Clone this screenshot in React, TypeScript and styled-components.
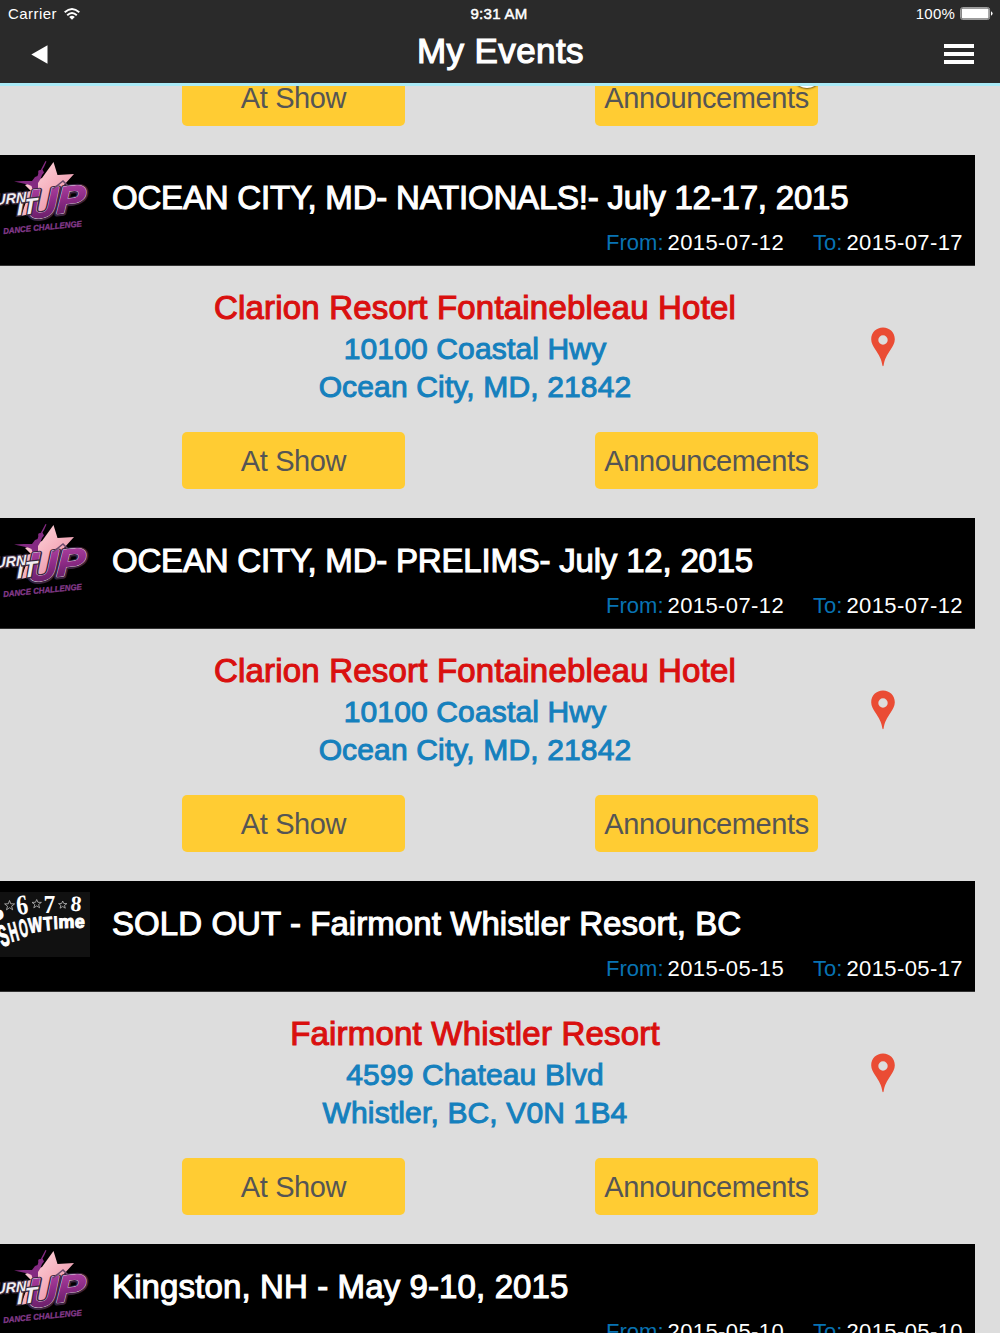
import styled, { createGlobalStyle } from "styled-components";

type LogoName = "turnItUp" | "showtime";

interface EventItem {
  id: number;
  logo: LogoName;
  title: string;
  from: string;
  to: string;
  venue?: string;
  street?: string;
  city?: string;
  titleSpacing: number;
}

const events: EventItem[] = [
  {
    id: 1,
    logo: "turnItUp",
    title: "OCEAN CITY, MD- NATIONALS!- July 12-17, 2015",
    from: "2015-07-12",
    to: "2015-07-17",
    venue: "Clarion Resort Fontainebleau Hotel",
    street: "10100 Coastal Hwy",
    city: "Ocean City, MD, 21842",
    titleSpacing: -0.2,
  },
  {
    id: 2,
    logo: "turnItUp",
    title: "OCEAN CITY, MD- PRELIMS- July 12, 2015",
    from: "2015-07-12",
    to: "2015-07-12",
    venue: "Clarion Resort Fontainebleau Hotel",
    street: "10100 Coastal Hwy",
    city: "Ocean City, MD, 21842",
    titleSpacing: -0.2,
  },
  {
    id: 3,
    logo: "showtime",
    title: "SOLD OUT - Fairmont Whistler Resort, BC",
    from: "2015-05-15",
    to: "2015-05-17",
    venue: "Fairmont Whistler Resort",
    street: "4599 Chateau Blvd",
    city: "Whistler, BC, V0N 1B4",
    titleSpacing: 0.07,
  },
  {
    id: 4,
    logo: "turnItUp",
    title: "Kingston, NH - May 9-10, 2015",
    from: "2015-05-10",
    to: "2015-05-10",
    titleSpacing: 0.12,
  },
];

const TurnItUpLogo = () => (
  <svg width="90" height="82" viewBox="0 0 90 82">
    <defs>
      <linearGradient id="star" x1="0" y1="0" x2="1" y2="1">
        <stop offset="0" stopColor="#ffe3e6" />
        <stop offset="0.5" stopColor="#f6b3c0" />
        <stop offset="1" stopColor="#dc7f9d" />
      </linearGradient>
      <linearGradient id="up" x1="0" y1="0" x2="0" y2="1">
        <stop offset="0" stopColor="#b345a5" />
        <stop offset="0.5" stopColor="#8c2a85" />
        <stop offset="1" stopColor="#5a1b5c" />
      </linearGradient>
    </defs>
    <path
      d="M53.500 7L57.500 20L74 19L64 30L68 41L44 56L21 61L27 44L20 38L31 36L25 30L42 23Z"
      fill="url(#star)"
    />
    <path
      d="M45.500 6L46.500 6.500L44 12L42.500 14.500L44 17.500L42 20L40.500 24L38 28L38 34L37 43L31.500 43L33 36L31.500 31L28 29.500L14 26.500L24 26L32 26L35 22L37.500 21L38.500 18L41 14.500Z"
      fill="#842a82"
    />
    <circle cx="40" cy="17" r="1.900" fill="#842a82" />
    <g
      fontFamily="'Liberation Sans', sans-serif"
      fontWeight="700"
      fontStyle="italic"
    >
      <g stroke="#3a2440" strokeWidth="5" strokeLinejoin="round" fill="#3a2440">
        <text transform="translate(27 64.500) rotate(-7) skewX(-8) scale(1.050 1)" fontSize="40">U</text>
        <text transform="translate(56.500 59) rotate(-6) skewX(-8) scale(1.150 1)" fontSize="37">P</text>
      </g>
      <g
        fill="url(#up)"
        stroke="#e9dfea"
        strokeWidth="1.800"
        strokeLinejoin="round"
        paintOrder="stroke"
      >
        <text transform="translate(27 64) rotate(-7) skewX(-8) scale(1.050 1)" fontSize="40">U</text>
        <text transform="translate(56.500 58.500) rotate(-6) skewX(-8) scale(1.150 1)" fontSize="37">P</text>
      </g>
      <g fill="url(#up)" stroke="url(#up)" strokeWidth="1">
        <text transform="translate(27 64) rotate(-7) skewX(-8) scale(1.050 1)" fontSize="40">U</text>
        <text transform="translate(56.500 58.500) rotate(-6) skewX(-8) scale(1.150 1)" fontSize="37">P</text>
      </g>
      <path d="M53 34L63 26L68 31" fill="none" stroke="#6a4a6c" strokeWidth="1.500" />
      <g
        fill="#efedf1"
        stroke="#37283b"
        strokeWidth="2.500"
        paintOrder="stroke"
      >
        <text transform="translate(17 60.500) rotate(-7) skewX(-6) scale(1.050 1)" fontSize="22">
          IT
        </text>
        <text transform="translate(-13.500 51) rotate(-6) skewX(-5)" fontSize="14.500">
          TURN
        </text>
      </g>
      <text
        transform="translate(3.400 79) rotate(-5.500)"
        fontSize="8.300"
        textLength="79"
        lengthAdjust="spacingAndGlyphs"
        fill="#843a8b"
        stroke="#843a8b"
        strokeWidth="0.300"
      >
        DANCE CHALLENGE
      </text>
    </g>
  </svg>
);

const ShowtimeLogo = () => (
  <svg width="90" height="65" viewBox="0 0 90 65">
    <rect width="90" height="65" fill="#111" />
    <g
      fill="#fff"
      fontFamily="'Liberation Serif', serif"
      fontWeight="700"
    >
      <text transform="translate(-8 30) rotate(-14)" fontSize="28">5</text>
      <text transform="translate(17.500 23) rotate(-8) scale(.84 1)" fontSize="28">6</text>
      <text transform="translate(43.500 20.500) scale(.9 1)" fontSize="26">7</text>
      <text transform="translate(70 18.500) rotate(5)" fontSize="22">8</text>
    </g>
    <g fill="none" stroke="#bbb" strokeWidth="0.800">
      <path d="M9.500 8.500l1.300 3.300 3.800.1-3 2.300 1.100 3.600-3.100-2.100-3.100 2.100 1-3.600-2.900-2.300 3.700-.1z" />
      <path d="M36.700 7.500l1.200 2.800 3.500.1-2.800 2.100 1 3.300-2.900-1.900-2.900 1.900 1-3.300-2.800-2.100 3.500-.1z" />
      <path d="M62.700 9l1.100 2.500 3.100.1-2.400 1.800.8 2.800-2.600-1.700-2.600 1.700.8-2.800-2.400-1.800 3.100-.1z" />
    </g>
    <g
      fill="#fff"
      stroke="#fff"
      strokeWidth="1"
      fontFamily="'Liberation Sans', sans-serif"
      fontWeight="700"
    >
      <text transform="translate(2 55) rotate(-18) scale(.48 1)" fontSize="30">S</text>
      <text transform="translate(11.500 50) rotate(-15) scale(.46 1)" fontSize="27">H</text>
      <text transform="translate(21 45.500) rotate(-12) scale(.44 1)" fontSize="25">O</text>
      <text transform="translate(29.500 41) rotate(-8) scale(.7 1)" fontSize="21">W</text>
      <text transform="translate(44 38.500) rotate(-5) scale(.78 1)" fontSize="19">T</text>
      <text transform="translate(54 37) rotate(-3) scale(.8 1)" fontSize="18">I</text>
      <text transform="translate(58.500 36) rotate(-1) scale(1 1)" fontSize="18">m</text>
      <text transform="translate(74.500 35.500) rotate(3)" fontSize="18">e</text>
    </g>
  </svg>
);

const WifiIcon = () => (
  <svg width="16" height="12" viewBox="0 0 16 12">
    <g fill="none" stroke="#fff" strokeWidth="1.900">
      <path d="M.7 4.300Q8-2.300 15.300 4.300" />
      <path d="M3.200 7.200Q8 2.700 12.800 7.200" />
    </g>
    <path d="M8 11.700L5.200 8.900Q8 6.500 10.800 8.900Z" fill="#fff" />
  </svg>
);

const BatteryIcon = () => (
  <svg width="33" height="13" viewBox="0 0 33 13">
    <rect x=".6" y=".6" width="29" height="11.800" rx="2" fill="none" stroke="#aaa" strokeWidth="1" />
    <rect x="1.600" y="1.600" width="27" height="9.800" rx="1" fill="#fff" />
    <path d="M31 4.300Q32.600 5 32.600 6.500T31 8.700Z" fill="#fff" />
  </svg>
);

const PinIcon = () => (
  <svg width="24" height="40" viewBox="0 0 24 40">
    <path
      fillRule="evenodd"
      d="M12 0.500C5.300 .500.200 5.500.200 12.200c0 3.600 1.900 6.900 4.100 10.300C8 28 10.500 32 11.400 38.500q.6 1.300 1.200 0C13.500 32 16 28 19.700 22.500c2.200-3.400 4.100-6.700 4.100-10.300C23.800 5.500 18.700.5 12 .5ZM12 8.300a4.700 4.700 0 1 1 0 9.400 4.700 4.700 0 0 1 0-9.400Z"
      fill="#ea4c34"
    />
  </svg>
);

const Actions = ({ badge }: { badge?: boolean }) => (
  <ButtonRow>
    <YellowButton>At Show</YellowButton>
    <YellowButton>
      Announcements
      {badge && <Badge />}
    </YellowButton>
  </ButtonRow>
);

const EventCard = ({ event }: { event: EventItem }) => (
  <article>
    <CardHeader>
      <LogoBox $top={event.logo === "showtime" ? 11 : 0}>
        {event.logo === "showtime" ? <ShowtimeLogo /> : <TurnItUpLogo />}
      </LogoBox>
      <CardInfo>
        <CardTitle $spacing={event.titleSpacing}>{event.title}</CardTitle>
        <Dates>
          <DateLabel>From:</DateLabel>
          <DateValue>{event.from}</DateValue>
          <DateLabel>To:</DateLabel>
          <DateValue>{event.to}</DateValue>
        </Dates>
      </CardInfo>
    </CardHeader>
    {event.venue && (
      <>
        <Place>
          <Address>
            <Venue>{event.venue}</Venue>
            <AddressLine>{event.street}</AddressLine>
            <AddressLine>{event.city}</AddressLine>
          </Address>
          <PinButton aria-label="Map">
            <PinIcon />
          </PinButton>
        </Place>
        <Actions />
      </>
    )}
  </article>
);

const App = () => {
  return (
    <Screen>
      <GlobalStyle />
      <TopBar>
        <StatusBar>
          <Carrier>
            Carrier
            <WifiIcon />
          </Carrier>
          <Clock>9:31 AM</Clock>
          <Power>
            100%
            <BatteryIcon />
          </Power>
        </StatusBar>
        <NavBar>
          <BackButton aria-label="Back">
            <svg width="17" height="19" viewBox="0 0 17 19">
              <path d="M.3 9.500L16.500.3V18.700Z" fill="#fff" />
            </svg>
          </BackButton>
          <PageTitle>My Events</PageTitle>
          <MenuButton aria-label="Menu">
            <MenuLine />
            <MenuLine />
            <MenuLine />
          </MenuButton>
        </NavBar>
      </TopBar>
      <List>
        <PreviousEvent>
          <Actions badge />
        </PreviousEvent>
        {events.map((event) => (
          <EventCard key={event.id} event={event} />
        ))}
      </List>
    </Screen>
  );
};
export default App;

const GlobalStyle = createGlobalStyle`
  body {
    margin: 0;
    background: #ddd;
    font-family: "Liberation Sans", Arial, sans-serif;
  }
  button {
    border: 0;
    padding: 0;
    background: none;
    font-family: inherit;
  }
  svg {
    display: block;
  }
`;

const Screen = styled.div`
  display: flex;
  flex-direction: column;
  width: 1000px;
  height: 1333px;
  overflow: hidden;
  background: #ddd;
`;

const TopBar = styled.header`
  flex: none;
  box-sizing: border-box;
  height: 86px;
  background: #2a2a2a;
  border-bottom: 3px solid #a9eaf6;
  color: #fff;
`;

const StatusBar = styled.div`
  display: grid;
  grid-template-columns: 1fr auto 1fr;
  height: 27px;
  padding: 0 7px 0 8px;
  font-size: 15px;
  line-height: 27px;
`;

const Carrier = styled.div`
  display: flex;
  align-items: center;
  gap: 7px;
  letter-spacing: 0.45px;
`;

const Clock = styled.div`
  padding-right: 3px;
  letter-spacing: 0.3px;
  -webkit-text-stroke: 0.5px #fff;
`;

const Power = styled.div`
  display: flex;
  align-items: center;
  justify-content: flex-end;
  gap: 5px;
  letter-spacing: 0.2px;
`;

const NavBar = styled.div`
  display: flex;
  align-items: center;
  justify-content: space-between;
  height: 54px;
  padding: 0 26px 0 31px;
`;

const BackButton = styled.button`
  width: 26px;
`;

const PageTitle = styled.h1`
  margin: -6px 0 0;
  font-size: 35px;
  font-weight: 400;
  line-height: 40px;
  letter-spacing: 0.4px;
  -webkit-text-stroke: 1.2px #fff;
`;

const MenuButton = styled.button`
  display: flex;
  flex-direction: column;
  gap: 4px;
  width: 30px;
`;

const MenuLine = styled.span`
  height: 4px;
  background: #fff;
`;

const List = styled.main`
  flex: 1;
  min-height: 0;
  overflow: hidden;
`;

const PreviousEvent = styled.div`
  margin-top: -17px;
`;

const CardHeader = styled.div`
  display: flex;
  box-sizing: border-box;
  width: 975px;
  height: 111px;
  background: #000;
  border-bottom: 1px solid #333;
`;

const LogoBox = styled.div<{ $top: number }>`
  width: 90px;
  padding-top: ${(props) => props.$top}px;
  overflow: hidden;
`;

const CardInfo = styled.div`
  flex: 1;
  padding: 24px 12px 0 22px;
`;

const CardTitle = styled.h2<{ $spacing: number }>`
  margin: 0 0 13px;
  color: #fff;
  font-size: 33px;
  font-weight: 400;
  line-height: 38px;
  letter-spacing: ${(props) => props.$spacing}px;
  white-space: nowrap;
  -webkit-text-stroke: 1.1px #fff;
`;

const Dates = styled.div`
  display: flex;
  justify-content: flex-end;
  font-size: 22px;
  line-height: 26px;
`;

const DateLabel = styled.span`
  margin-right: 4px;
  color: #0873b3;
`;

const DateValue = styled.span`
  color: #fff;
  letter-spacing: 0.4px;

  & + ${DateLabel} {
    margin-left: 29px;
  }
`;

const Place = styled.div`
  display: grid;
  grid-template-columns: 694px 122px;
  padding: 22px 0 27px 128px;
`;

const Address = styled.div`
  text-align: center;
`;

const Venue = styled.div`
  margin-bottom: 2px;
  color: #d9100f;
  font-size: 33px;
  line-height: 40px;
  letter-spacing: 0.2px;
  -webkit-text-stroke: 1.1px #d9100f;
`;

const AddressLine = styled.div`
  color: #1580bd;
  font-size: 30px;
  line-height: 37.5px;
  letter-spacing: 0.15px;
  -webkit-text-stroke: 1px #1580bd;
`;

const PinButton = styled.button`
  display: flex;
  align-items: center;
  justify-content: center;
`;

const ButtonRow = styled.div`
  display: flex;
  gap: 190px;
  padding: 0 0 29px 182px;
`;

const YellowButton = styled.button`
  position: relative;
  width: 223px;
  height: 57px;
  padding-top: 2px;
  border-radius: 5px;
  background: #ffcc33;
  color: #555;
  font-size: 29px;
  letter-spacing: -0.38px;
`;

const Badge = styled.span`
  position: absolute;
  top: -11px;
  right: -4px;
  box-sizing: border-box;
  width: 30px;
  height: 30px;
  border: 3px solid #fff;
  border-radius: 50%;
  background: #e33;
  box-shadow: 0 1px 2px rgba(0, 0, 0, 0.6);
`;
